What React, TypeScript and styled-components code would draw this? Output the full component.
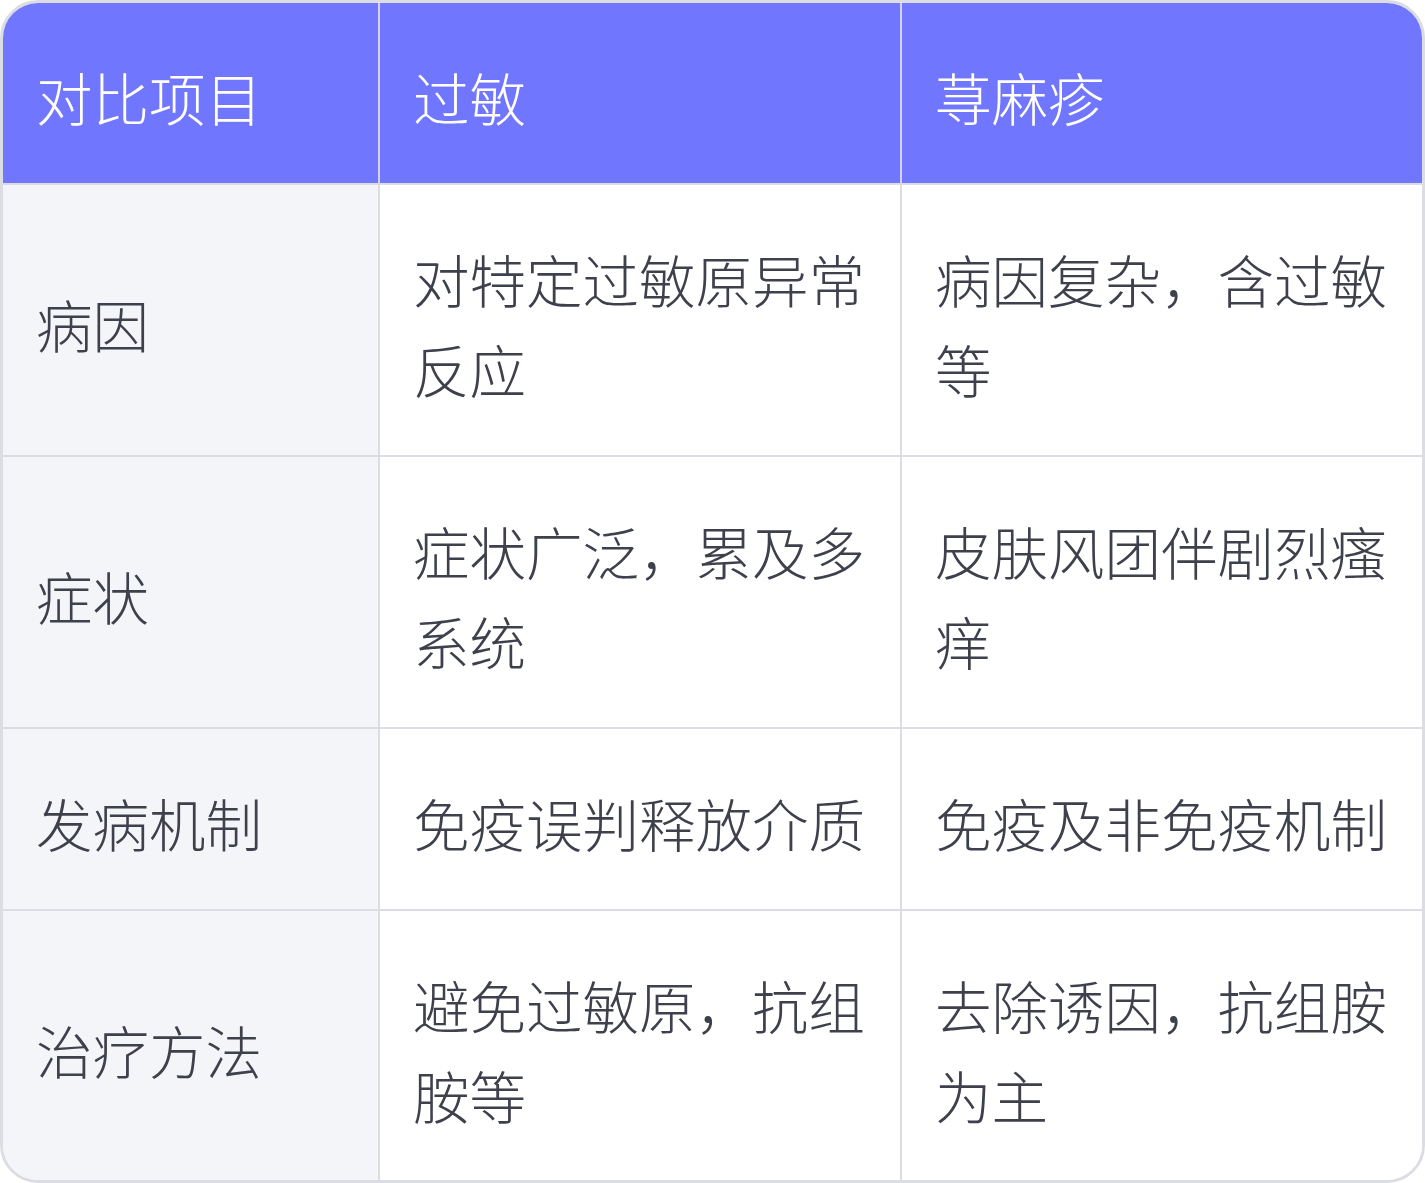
import React from "react";
import styled, { createGlobalStyle } from "styled-components";

const GlobalStyle = createGlobalStyle`
  html, body {
    margin: 0;
    padding: 0;
    background: #ffffff;
  }
  body {
    font-family: "Noto Sans CJK SC", "Noto Sans", sans-serif;
  }
`;

const Wrapper = styled.div`
  width: 1425px;
  height: 1183px;
  box-sizing: border-box;
  border: 3px solid #dcdde2;
  border-radius: 38px;
  overflow: hidden;
  background: #ffffff;
`;

const Table = styled.table`
  width: 100%;
  height: 100%;
  border-collapse: separate;
  border-spacing: 0;
  table-layout: fixed;
`;

const HeadCell = styled.th`
  background: #7077fe;
  color: #ffffff;
  font-weight: 300;
  font-size: 56.5px;
  line-height: 90px;
  text-align: left;
  padding: 48px 30px 42px 33px;
  border-bottom: 2px solid #dcdde2;
  border-right: 2px solid #d2d4f2;
  &:last-child {
    border-right: none;
  }
`;

const Cell = styled.td<{ $label?: boolean; $last?: boolean }>`
  background: ${p => (p.$label ? "#f4f5f9" : "#ffffff")};
  color: #3e404c;
  font-weight: 300;
  font-size: 56.5px;
  line-height: 90px;
  vertical-align: middle;
  padding: 48px 30px 42px 33px;
  border-bottom: ${p => (p.$last ? "none" : "2px solid #dcdde2")};
  border-right: 2px solid #dcdde2;
  &:last-child {
    border-right: none;
  }
`;

const rows = [
  ["病因", "对特定过敏原异常反应", "病因复杂，含过敏等"],
  ["症状", "症状广泛，累及多系统", "皮肤风团伴剧烈瘙痒"],
  ["发病机制", "免疫误判释放介质", "免疫及非免疫机制"],
  ["治疗方法", "避免过敏原，抗组胺等", "去除诱因，抗组胺为主"],
];

const App: React.FC = () => {
  return (
    <>
      <GlobalStyle />
      <Wrapper>
        <Table>
          <colgroup>
            <col style={{ width: 377 }} />
            <col style={{ width: 522 }} />
            <col />
          </colgroup>
          <thead>
            <tr>
              <HeadCell>对比项目</HeadCell>
              <HeadCell>过敏</HeadCell>
              <HeadCell>荨麻疹</HeadCell>
            </tr>
          </thead>
          <tbody>
            {rows.map((row, i) => (
              <tr key={i}>
                {row.map((text, j) => (
                  <Cell key={j} $label={j === 0} $last={i === rows.length - 1}>
                    {text}
                  </Cell>
                ))}
              </tr>
            ))}
          </tbody>
        </Table>
      </Wrapper>
    </>
  );
};

export default App;
